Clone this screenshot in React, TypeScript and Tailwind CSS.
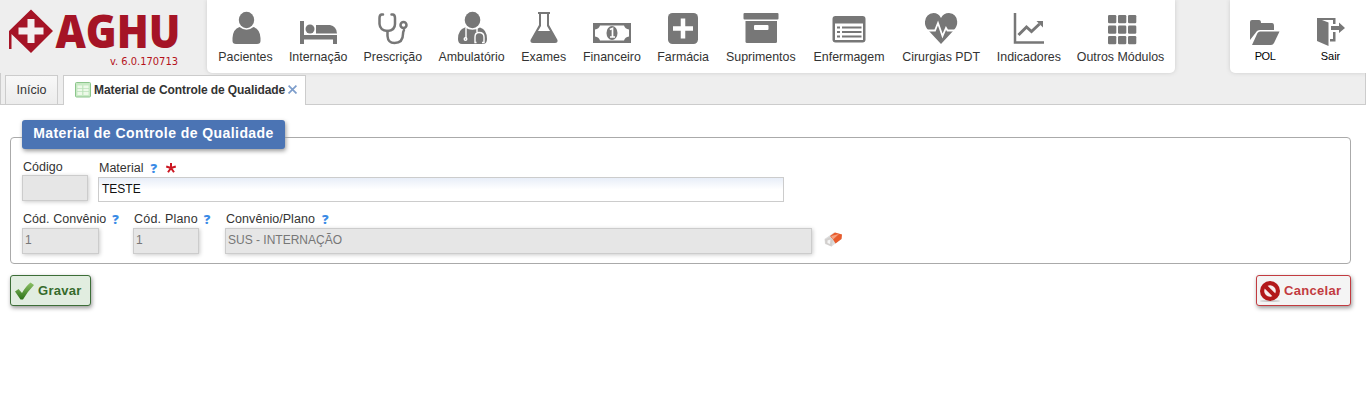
import type { ReactNode } from "react";

function Icon({ children }: { children: ReactNode }) {
  return (
    <svg width="40" height="36" viewBox="0 0 40 36" fill="#777" stroke="none" className="block shrink-0">
      {children}
    </svg>
  );
}

const line = { fill: "none", stroke: "#777" } as const;

const modules: { label: string; width: string; icon: ReactNode }[] = [
  {
    label: "Pacientes",
    width: "w-[55px]",
    icon: (
      <>
        <ellipse cx="20.5" cy="10" rx="7.7" ry="8.2" />
        <path d="M13.5 17Q7 19 6.5 28V31Q6.500 34 10 34H31Q34.500 34 34.500 31V28Q34 19 27.500 17Q20.500 22.500 13.500 17Z" />
      </>
    ),
  },
  {
    label: "Internação",
    width: "w-[58px]",
    icon: (
      <>
        <path d="M2 11H6V25H39V34H35V29.500H6V34H2Z" />
        <circle cx="12" cy="19" r="4.500" />
        <path d="M18 15H32Q38.500 16 39 23.500H18Z" />
      </>
    ),
  },
  {
    label: "Prescrição",
    width: "w-[59px]",
    icon: (
      <g {...line} strokeWidth="2.500" strokeLinecap="round">
        <path d="M10 4.500H8.500Q6.500 5 6.500 8V14Q7 20.500 14.500 21Q22 20.500 22 14V8Q22 5 20 4.500H18.500" />
        <path d="M14.500 21V26Q15 33 21.500 33Q30 33 30 24Q30 22 31 20" />
        <circle cx="30.500" cy="15" r="3" />
      </g>
    ),
  },
  {
    label: "Ambulatório",
    width: "w-[66px]",
    icon: (
      <>
        <ellipse cx="20.500" cy="10" rx="7.800" ry="8.200" />
        <path d="M13 17.500Q6 19.500 6 29Q6 34 10 34H31Q35 34 35 29Q35 19.500 28 17.500Q20.500 22 13 17.500Z" />
        <g fill="none" stroke="#fff" strokeWidth="1.400">
          <path d="M14 18V28M25 18V22" />
          <circle cx="13.500" cy="29" r="1.300" />
          <path d="M24.500 32.500H23V27Q23 22.500 27 22.500Q32 22.500 32 27V32.500H30" />
        </g>
      </>
    ),
  },
  {
    label: "Exames",
    width: "w-[46px]",
    icon: (
      <>
        <path d="M14 2H26V4H25V15L33.500 30Q34 33 31 33H9Q6 33 6.500 30L15 15V4H14Z" />
        <path fill="#fff" d="M17 4H23V16L26 21H14L17 16Z" />
      </>
    ),
  },
  {
    label: "Financeiro",
    width: "w-[58px]",
    icon: (
      <>
        <path d="M1 13H39V33H1Z" />
        <path fill="#fff" d="M8 15.500H32Q33 19 37 19.500V26.500Q33 27 32 30.500H8Q7 27 3 26.500V19.500Q7 19 8 15.500Z" />
        <ellipse cx="20" cy="23" rx="5.500" ry="7" />
        <path d="M17.800 19.500L20.500 18.500V26.500M18 27H23" fill="none" stroke="#fff" strokeWidth="1.700" />
      </>
    ),
  },
  {
    label: "Farmácia",
    width: "w-[52px]",
    icon: (
      <>
        <rect x="5" y="3" width="30" height="31" rx="4.500" />
        <path d="M20 8.500V28.500M10 18.500H30" fill="none" stroke="#fff" strokeWidth="4.500" />
      </>
    ),
  },
  {
    label: "Suprimentos",
    width: "w-[71px]",
    icon: (
      <>
        <rect x="2.500" y="3" width="35" height="6.500" rx="1" />
        <path d="M4.500 11H36V31.500Q36 33 34.500 33H6Q4.500 33 4.500 31.500Z" />
        <rect x="13" y="15" width="14.500" height="5" rx="1" fill="#fff" />
      </>
    ),
  },
  {
    label: "Enfermagem",
    width: "w-[73px]",
    icon: (
      <>
        <rect x="3.500" y="6" width="33" height="26.500" rx="3" />
        <rect x="6" y="13.500" width="28" height="16.500" fill="#fff" />
        <path {...line} strokeWidth="2.200" d="M8 17.500H11M13 17.500H32.500M8 22H11M13 22H32.500M8 26.500H11M13 26.500H32.500" />
      </>
    ),
  },
  {
    label: "Cirurgias PDT",
    width: "w-[79px]",
    icon: (
      <>
        <path d="M20 34L7 20Q3.500 16 4 11.500Q5 3.500 12.500 3Q17.500 3 20 8Q22.500 3 28 3Q35.500 3.500 36.200 11.500Q36.500 16 33 20Z" />
        <path d="M4 20.500H14L17 13L21.500 26L25 18L26.500 20.500H36" fill="none" stroke="#fff" strokeWidth="1.800" />
      </>
    ),
  },
  {
    label: "Indicadores",
    width: "w-[64px]",
    icon: (
      <>
        <path {...line} strokeWidth="2.500" d="M6 3V32.500H35" />
        <path {...line} strokeWidth="3" d="M9.500 25L17.500 17L22.500 21.500L30.500 14" />
        <path d="M27.500 11H34V17.500Z" />
      </>
    ),
  },
  {
    label: "Outros Módulos",
    width: "w-[87px]",
    icon: (
      <>
        {[5, 15.5, 26].map((y) =>
          [7, 17, 27].map((x) => <rect key={`${x}-${y}`} x={x} y={y} width="8.300" height="8.300" rx="1.200" />),
        )}
      </>
    ),
  },
];

function Help({ className = "" }: { className?: string }) {
  return <span className={`font-['Open_Sans',sans-serif] text-[13px] leading-4 font-extrabold tracking-normal text-[#3b8be6] ${className}`}>?</span>;
}

function Logo() {
  return (
    <svg width="207" height="73" viewBox="0 0 207 73" className="block shrink-0">
      <path d="M31 9.500L53 31L31 53L11.500 34V49H9V31Z" fill="#a51426" />
      <path d="M31 19V43M18.500 31H43.500" stroke="#f4eeee" strokeWidth="7" fill="none" />
      <text x="55.500" y="48" textLength="125" lengthAdjust="spacingAndGlyphs" fontFamily="Open Sans, sans-serif" fontWeight="800" fontSize="46" fill="#a51426">
        AGHU
      </text>
      <text x="110" y="65" textLength="68" fontFamily="DejaVu Sans, sans-serif" fontSize="10.500" fill="#b5121b" lengthAdjust="spacingAndGlyphs">
        v. 6.0.170713
      </text>
    </svg>
  );
}

function Header() {
  return (
    <header className="flex h-[73px] bg-[#eee]">
      <Logo />
      <nav className="flex h-[73px] w-[968px] gap-[16.2px] rounded-b-[5px] bg-white pt-[10px] pl-[11px] shadow-[0_0_4px_#ccc]">
        {modules.map((m) => (
          <a key={m.label} className={`flex shrink-0 flex-col items-center ${m.width}`}>
            <Icon>{m.icon}</Icon>
            <span className="mt-[3px] text-[12.4px] leading-4 whitespace-nowrap">{m.label}</span>
          </a>
        ))}
      </nav>
      <nav className="ml-auto flex h-[73px] w-[136px] gap-[25px] rounded-bl-[5px] bg-white pt-[10px] pl-[15px] text-black shadow-[0_0_4px_#ccc]">
        <a className="flex w-10 flex-col items-center">
          <Icon>
            <path d="M5 30V12Q5 10 7 10H14Q16 10 16 13H27Q29 13 29 16V20H15Q12 20 10.500 23Z" />
            <path d="M7 35L12.500 23Q13.500 21.500 15 21.500H34.500L29 33Q28 35 26 35Z" />
          </Icon>
          <span className="mt-[3px] text-[11px] leading-[15px] tracking-[-0.5px]">POL</span>
        </a>
        <a className="flex w-10 flex-col items-center">
          <Icon>
            <path d="M7 8H25.500V14H23V10H12L18.500 12.500V36L7 31Z" />
            <path d="M23 22H25.500V31.500H20V29H23Z" />
            <path d="M21 16H29V12.500L35 18L29 23V20H21Z" />
          </Icon>
          <span className="mt-[3px] ml-px text-[11px] leading-[15px]">Sair</span>
        </a>
      </nav>
    </header>
  );
}

function TabBar() {
  return (
    <div className="flex h-8 items-end border-x border-b border-[#ccc] bg-[#eee] pl-1">
      <div className="flex h-[29px] w-[53px] items-center justify-center border border-b-0 border-[#ccc] bg-linear-to-b from-[#f8f8f8] to-[#ececec] text-[12.5px]">
        Início
      </div>
      <div className="-mb-px ml-[5px] flex h-[30px] w-[243px] items-center border border-b-0 border-[#ccc] bg-white pb-0.5 pl-[11px] text-[12px] font-bold">
        <svg width="16" height="16" viewBox="0 0 16 16" className="shrink-0">
          <rect x="0.500" y="0.500" width="15" height="14.500" rx="1" fill="#c8eac5" stroke="#8cc58c" />
          <path d="M2.500 3.500H7V13H2.500ZM8.500 3.500H13.500V13H8.500Z" fill="#edf9e9" />
          <path d="M2 6.500H14M2 9.500H14" stroke="#b7dfb7" strokeWidth="0.700" />
        </svg>
        <span className="ml-[3px] tracking-[-0.09px] whitespace-nowrap">Material de Controle de Qualidade</span>
        <svg width="9" height="9" viewBox="0 0 8 8" className="ml-[3px] shrink-0">
          <path d="M0.500 0.500L7.500 7.500M7.500 0.500L0.500 7.500" stroke="#7d9dcb" strokeWidth="1.500" />
        </svg>
      </div>
    </div>
  );
}

const disabledField =
  "flex h-[26px] items-center border border-[#ccc] bg-[#e6e6e6] pb-0.5 pl-[2px] text-[12px] text-[#777] shadow-[1px_1px_4px_#ccc]";

const labelRow = "flex h-4 items-center pl-px text-[12.5px] whitespace-nowrap";

function MaterialForm() {
  return (
    <section className="mx-[10px] mt-[32px] h-[127px] w-[1341px] rounded-[4px] border border-[#aaa] px-[11px]">
      <h1 className="relative -mt-[18px] flex h-[29px] w-[263px] items-center justify-center rounded-[3px] bg-[#4b74b4] pb-[3px] text-[14px] font-bold tracking-[0.43px] whitespace-nowrap text-white shadow-[1px_2px_4px_#999]">
        Material de Controle de Qualidade
      </h1>
      <div className="mt-[11px] flex gap-[10px]">
        <label className="w-[66px]">
          <span className="flex h-[15px] items-center pl-px text-[12.5px]">Código</span>
          <span className={`${disabledField} w-[66px]`} />
        </label>
        <label className="w-[686px]">
          <span className={labelRow}>
            Material
            <Help className="ml-[7px]" />
            <svg width="12" height="12" viewBox="0 0 12 12" className="ml-[8px]">
              <path d="M6 6V1M6 6L1.200 4.500M6 6L10.800 4.500M6 6L3 10.300M6 6L9 10.300" stroke="#cc1722" strokeWidth="2" fill="none" />
            </svg>
          </span>
          <span className="mt-px flex h-[25px] items-center border border-[#ccc] bg-linear-to-b from-[#e8eef8] to-white to-50% pb-0.5 pl-[3px] text-[12px] text-[#111]">TESTE</span>
        </label>
      </div>
      <div className="mt-[9px] flex">
        <label className="w-[77px]">
          <span className={labelRow}>
            <span className="tracking-[0.05px]">Cód. Convênio</span>
            <Help className="ml-[6px]" />
          </span>
          <span className={`${disabledField} mt-px w-[77px]`}>1</span>
        </label>
        <label className="ml-[34px] w-[66px]">
          <span className={labelRow}>
            <span className="tracking-[0.2px]">Cód. Plano</span>
            <Help className="ml-[6px]" />
          </span>
          <span className={`${disabledField} mt-px w-[66px]`}>1</span>
        </label>
        <label className="ml-[26px] w-[587px]">
          <span className={labelRow}>
            <span className="tracking-[0.05px]">Convênio/Plano</span>
            <Help className="ml-[7px]" />
          </span>
          <span className={`${disabledField} mt-px w-[587px]`}>SUS - INTERNAÇÃO</span>
        </label>
        <svg width="18" height="16" viewBox="0 0 18 16" className="mt-[20px] ml-[12px]">
          <path d="M0.500 8L10 1.500L18 3.500L17.500 8L7.500 15.500L1 13Z" fill="#ddd" />
          <path d="M6 5L11 1.500L18 3.500L17.500 8L11.500 12.500L9 8.500Z" fill="#e85b2c" />
          <path d="M7 5L15 3L9 8.500Z" fill="#f6a07e" />
          <path d="M1 8.500L6 6L9 9L7.500 15.500L1.500 12.500Z" fill="#d2cfcd" />
          <path d="M3.500 9.500L6.500 8.500L6 13L3.500 12Z" fill="#f5f5f5" />
        </svg>
      </div>
    </section>
  );
}

function Actions() {
  return (
    <div className="mt-[11px] mr-[15px] ml-[10px] flex justify-between text-[13px] font-bold tracking-[0.3px]">
      <button className="flex h-[31px] w-[81px] items-center rounded-[3px] border border-[#3c6e37] bg-[#e1ede0] pl-[3px] text-[#356b2c] shadow-[1px_2px_4px_#999]">
        <svg width="21" height="20" viewBox="0 0 21 20" className="mr-[3px] shrink-0">
          <defs>
            <linearGradient id="check" x1="0" y1="0" x2="0" y2="1">
              <stop offset="0" stopColor="#8dc267" />
              <stop offset="1" stopColor="#2d7218" />
            </linearGradient>
          </defs>
          <path d="M1 10.500L4.500 8L8 12Q12 5 16.500 1.500L20 4Q14 10 9 18.500H6.500Z" fill="url(#check)" />
        </svg>
        Gravar
      </button>
      <button className="flex h-[31px] w-[95px] items-center rounded-[3px] border border-[#c23b40] bg-[#f4f4f4] pl-[2px] text-[#c23b40] shadow-[1px_2px_4px_#999]">
        <svg width="22" height="24" viewBox="0 0 22 24" className="mr-[3px] shrink-0">
          <ellipse cx="11" cy="22" rx="10" ry="1" fill="#ccc" />
          <circle cx="11" cy="12" r="10" fill="#b3191b" />
          <circle cx="11" cy="12" r="5.800" fill="#f7eeee" />
          <path d="M6 7L16 17" stroke="#b3191b" strokeWidth="4" />
        </svg>
        Cancelar
      </button>
    </div>
  );
}

export default function App() {
  return (
    <div className="h-[412px] w-[1366px] overflow-hidden bg-white font-['Liberation_Sans',Arial,sans-serif] text-[#333]">
      <Header />
      <TabBar />
      <MaterialForm />
      <Actions />
    </div>
  );
}
